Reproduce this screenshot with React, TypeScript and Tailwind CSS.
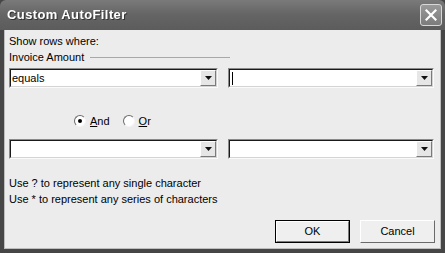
import React from "react";

function DropArrow() {
  return (
    <div className="w-[16px] h-[16px] bg-[#e6e6e6] border border-t-white border-l-white border-b-[#7a7a7a] border-r-[#7a7a7a] flex items-center justify-center shrink-0">
      <svg width="7" height="4" viewBox="0 0 7 4">
        <path d="M0 0h7L3.5 4z" fill="#111" />
      </svg>
    </div>
  );
}

function Combo({ value, caret, className }: { value?: string; caret?: boolean; className?: string }) {
  return (
    <div className={`h-[20px] border border-t-[#8a8a8a] border-l-[#8a8a8a] border-b-[#fafafa] border-r-[#fafafa] ${className ?? ""}`}>
      <div className="h-full border border-t-[#1a1a1a] border-l-[#1a1a1a] border-b-[#d4d4d4] border-r-[#d4d4d4] bg-white flex items-center pl-[1px] pr-[0px]">
        <div className="flex-1 flex items-center text-[11px] leading-none text-black">
          {caret && <span className="inline-block w-[1px] h-[13px] bg-black ml-[1px]" />}
          {value}
        </div>
        <DropArrow />
      </div>
    </div>
  );
}

function Radio({ checked, label }: { checked?: boolean; label: string }) {
  return (
    <div className="flex items-center gap-[4px] h-[14px]">
      <div className="w-[12px] h-[12px] rounded-full bg-white border border-t-[#6a6a6a] border-l-[#6a6a6a] border-b-[#f4f4f4] border-r-[#f4f4f4] flex items-center justify-center">
        {checked && <div className="w-[4px] h-[4px] rounded-full bg-black" />}
      </div>
      <span className="text-[11px] leading-none text-black">
        <span className="underline">{label[0]}</span>
        {label.slice(1)}
      </span>
    </div>
  );
}

export default function App() {
  return (
    <div
      className="w-[445px] h-[253px] bg-[#464646] flex flex-col overflow-hidden"
      style={{ fontFamily: '"Liberation Sans", Arial, sans-serif' }}
    >
      {/* Title bar */}
      <div className="h-[30px] shrink-0 bg-gradient-to-b from-[#7a7a7a] via-[#646464] to-[#5c5c5c] flex items-center justify-between pl-[7px] pr-[3px] rounded-t-[6px]">
        <span className="text-[13px] font-bold text-white tracking-[0.4px] drop-shadow-[1px_1px_0_#333]">
          Custom AutoFilter
        </span>
        <div className="w-[22px] h-[22px] rounded-[3px] border border-[#d8d8d8] bg-gradient-to-b from-[#9a9a9a] to-[#7c7c7c] flex items-center justify-center">
          <svg width="12" height="12" viewBox="0 0 12 12">
            <path d="M1.5 1.5l9 9M10.5 1.5l-9 9" stroke="white" strokeWidth="2.2" strokeLinecap="square" />
          </svg>
        </div>
      </div>

      {/* Body */}
      <div className="flex-1 mx-[4px] mb-[4px] bg-[#ececec] border-l border-r border-b border-[#bdbdbd] flex flex-col px-[4px] pt-[5px]">
        <div className="text-[11px] leading-[13px] text-black">Show rows where:</div>
        <div className="flex items-center gap-[6px] mt-[3px] w-[221px]">
          <span className="text-[11px] leading-[13px] text-black">Invoice Amount</span>
          <div className="flex-1 h-[1px] bg-[#a8a8a8]" />
        </div>

        <div className="flex gap-[10px] mt-[4px]">
          <Combo value="equals" className="w-[209px]" />
          <Combo caret className="w-[206px]" />
        </div>

        <div className="flex items-center gap-[13px] pl-[65px] mt-[26px]">
          <Radio checked label="And" />
          <Radio label="Or" />
        </div>

        <div className="flex gap-[10px] mt-[11px]">
          <Combo className="w-[209px]" />
          <Combo className="w-[206px]" />
        </div>

        <div className="mt-[16px] text-[11px] leading-[16px] text-black">
          <div>Use ? to represent any single character</div>
          <div>Use * to represent any series of characters</div>
        </div>

        <div className="flex justify-end gap-[10px] mt-[13px] pr-[1px]">
          <div className="w-[75px] h-[23px] border border-black">
            <div className="h-full border border-t-white border-l-white border-b-[#7a7a7a] border-r-[#7a7a7a] bg-[#efefef] flex items-center justify-center text-[11px] text-black">
              OK
            </div>
          </div>
          <div className="w-[75px] h-[23px] border border-t-white border-l-white border-b-[#6a6a6a] border-r-[#6a6a6a] bg-[#efefef] flex items-center justify-center text-[11px] text-black">
            Cancel
          </div>
        </div>
      </div>
    </div>
  );
}
